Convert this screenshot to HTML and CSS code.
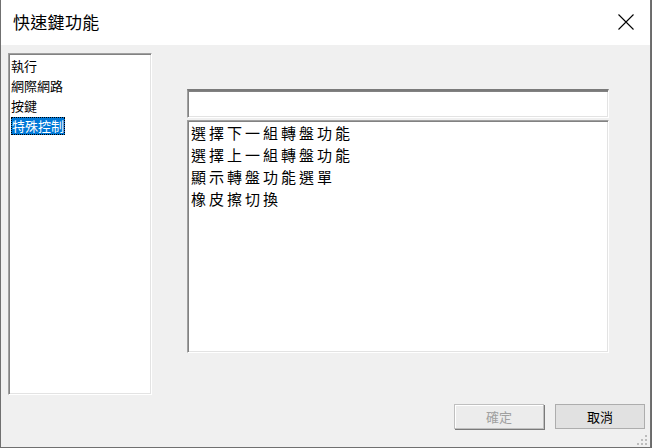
FILE: index.html
```html
<!DOCTYPE html>
<html lang="zh-Hant">
<head>
    <meta charset="UTF-8">
    <title>快速鍵功能</title>
    <link rel="stylesheet" href="styles.css">
</head>
<body>
    <div class="dialog">
        <div class="title-bar">
            <span class="title">快速鍵功能</span>
            <svg class="close-btn" width="16" height="16" viewBox="0 0 16 16">
                <path d="M0.5 0.5 L15.5 15.5 M15.5 0.5 L0.5 15.5" stroke="#000" stroke-width="1.1" fill="none"/>
            </svg>
        </div>

        <div class="dialog-body">
            <div class="main-row">
                <ul class="category-list sunken">
                    <li>執行</li>
                    <li>網際網路</li>
                    <li>按鍵</li>
                    <li><span class="selected">特殊控制</span></li>
                </ul>

                <div class="detail-panel">
                    <div class="key-input sunken"></div>
                    <ul class="function-list sunken">
                        <li>選擇下一組轉盤功能</li>
                        <li>選擇上一組轉盤功能</li>
                        <li>顯示轉盤功能選單</li>
                        <li>橡皮擦切換</li>
                    </ul>
                </div>
            </div>

            <div class="button-row">
                <button class="btn" disabled>確定</button>
                <button class="btn">取消</button>
            </div>
        </div>

        <svg class="grip" width="10" height="10" viewBox="0 0 10 10">
            <rect x="8" y="0" width="2" height="2" fill="#bcbcbc"/>
            <rect x="4" y="4" width="2" height="2" fill="#bcbcbc"/>
            <rect x="8" y="4" width="2" height="2" fill="#bcbcbc"/>
            <rect x="0" y="8" width="2" height="2" fill="#bcbcbc"/>
            <rect x="4" y="8" width="2" height="2" fill="#bcbcbc"/>
            <rect x="8" y="8" width="2" height="2" fill="#bcbcbc"/>
        </svg>
    </div>
</body>
</html>
```

FILE: styles.css
```css
body {
    margin: 0;
    background-color: #6a6a6a;
    font-family: "Noto Sans CJK TC", "Noto Sans", sans-serif;
    color: #000;
}

.dialog {
    position: relative;
    width: 649px;
    height: 447px;
    background-color: #f0f0f0;
    border-left: 1px solid #707070;
    border-right: 1px solid #707070;
    border-bottom: 1px solid #707070;
    display: flex;
    flex-direction: column;
}

.title-bar {
    height: 45px;
    background-color: #fff;
    display: flex;
    align-items: center;
    justify-content: space-between;
    padding: 0 16px 0 12px;
}

.title {
    font-size: 17px;
    letter-spacing: 0.3px;
    margin-top: -2px;
}

.close-btn {
    margin-top: -1px;
}

.dialog-body {
    flex: 1;
    padding: 8px 5px 0 7px;
    display: flex;
    flex-direction: column;
}

.main-row {
    display: flex;
}

/* sunken 3d borders */
.sunken {
    background-color: #fff;
    border: 1px solid;
    border-color: #a0a0a0 #fff #fff #a0a0a0;
    box-shadow: inset 1px 1px 0 #828282, inset -1px -1px 0 #e3e3e3;
    box-sizing: border-box;
}

ul {
    list-style: none;
    margin: 0;
}

.category-list {
    width: 144px;
    height: 342px;
    padding: 2px 2px 0 2px;
    font-size: 13px;
}

.category-list li {
    height: 20px;
    line-height: 20px;
}

.selected {
    display: inline-block;
    height: 18px;
    line-height: 18px;
    padding: 0 1px;
    margin-top: 1px;
    background-color: #0078d7;
    color: #fff;
    outline: 1px dotted #000;
    outline-offset: -1px;
}

.detail-panel {
    margin-left: 35px;
    padding-top: 36px;
    width: 422px;
}

.key-input {
    height: 29px;
    border-top-width: 2px;
    border-top-color: #7a7a7a;
}

.function-list {
    margin-top: 2px;
    height: 233px;
    padding: 1px 2px 1px 3px;
    font-size: 15px;
    letter-spacing: 3px;
}

.function-list li {
    height: 22px;
    line-height: 22px;
}

.button-row {
    display: flex;
    justify-content: flex-end;
    gap: 11px;
    margin-top: 9px;
}

.btn {
    width: 90px;
    height: 25px;
    padding: 0;
    font-family: "Noto Sans CJK TC", "Noto Sans", sans-serif;
    font-size: 13px;
    background-color: #e1e1e1;
    border: 1px solid #adadad;
    color: #000;
}

.btn:disabled {
    background-color: #ececec;
    border: 1px solid #bfbfbf;
    box-shadow: inset 1px 1px 0 #fff, 1px 1px 0 #7a7a7a;
    color: #a0a0a0;
}

.grip {
    position: absolute;
    right: 3px;
    bottom: 2px;
}
```
